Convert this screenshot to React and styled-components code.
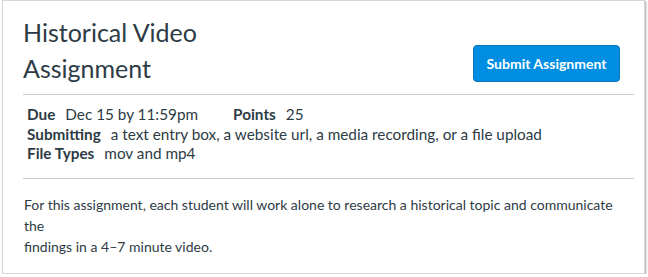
import React from 'react'
import styled, { createGlobalStyle } from 'styled-components';

const GlobalStyle = createGlobalStyle`
    body {
        margin: 0;
        background: #ffffff;
        font-family: Lato, "Liberation Sans", sans-serif;
        color: #2D3B45;
    }
`;

const Frame = styled.div`
    box-sizing: border-box;
    width: 643px;
    height: 274px;
    margin-left: 2px;
    border: 1px solid #d6d6d6;
    box-shadow: 1px 1px 2px rgba(0, 0, 0, 0.35);
    background: #fff;
    padding: 0 10px 0 20px;
`;

const Header = styled.div`
    display: flex;
    justify-content: space-between;
    align-items: flex-start;
    padding: 9px 14px 8px 0;
    border-bottom: 1px solid #C7CDD1;
`;

const Title = styled.h1`
    margin: 0;
    padding-top: 4px;
    font-size: 25px;
    font-weight: 400;
    line-height: 36px;
    width: 210px;
`;

const SubmitButton = styled.button`
    margin-top: 35px;
    font-family: Lato, "Liberation Sans", sans-serif;
    font-size: 14px;
    font-weight: 700;
    color: #fff;
    background: #008EE2;
    border: 1px solid #0374B5;
    border-radius: 4px;
    height: 37px;
    width: 147px;
    padding: 0;
`;

const Details = styled.div`
    padding: 10px 0 14px 4px;
    font-size: 15.3px;
    line-height: 19.5px;
    border-bottom: 1px solid #C7CDD1;
`;

const DetailRow = styled.div`
    display: flex;
`;

const Item = styled.span`
    margin-right: ${p => p.$gap || 0}px;
`;

const Label = styled.b`
    font-weight: 700;
    margin-right: 10px;
`;

const Description = styled.p`
    margin: 0;
    padding: 15px 0 0 1px;
    font-size: 14px;
    line-height: 21px;
`;

function App() {
    return (
        <>
            <GlobalStyle />
            <Frame>
                <Header>
                    <Title>Historical Video Assignment</Title>
                    <SubmitButton>Submit Assignment</SubmitButton>
                </Header>
                <Details>
                    <DetailRow>
                        <Item $gap={35}><Label>Due</Label>Dec 15 by 11:59pm</Item>
                        <Item><Label>Points</Label>25</Item>
                    </DetailRow>
                    <DetailRow>
                        <Item><Label>Submitting</Label>a text entry box, a website url, a media recording, or a file upload</Item>
                    </DetailRow>
                    <DetailRow>
                        <Item><Label>File Types</Label>mov and mp4</Item>
                    </DetailRow>
                </Details>
                <Description>
                    For this assignment, each student will work alone to research a historical topic and communicate<br />
                    the<br />
                    findings in a 4–7 minute video.
                </Description>
            </Frame>
        </>
    )
}

export default App;
